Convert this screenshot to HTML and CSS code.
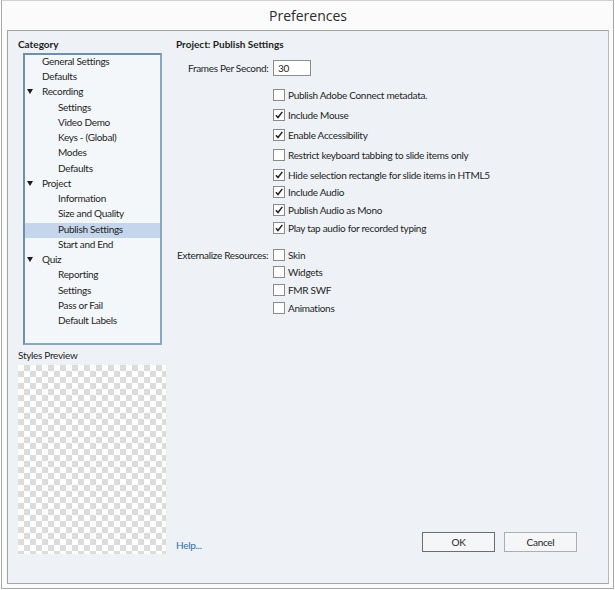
FILE: index.html
```html
<!DOCTYPE html>
<html>
<head>
<meta charset="utf-8">
<link rel="stylesheet" href="styles.css">
</head>
<body>
<div class="window">
  <div class="titlebar">Preferences</div>
  <div class="panel">
    <div class="left">
      <div class="heading">Category</div>
      <div class="tree">
        <div class="row l0">General Settings</div>
        <div class="row l0">Defaults</div>
        <div class="row l0"><span class="tri"></span>Recording</div>
        <div class="row l1">Settings</div>
        <div class="row l1">Video Demo</div>
        <div class="row l1">Keys - (Global)</div>
        <div class="row l1">Modes</div>
        <div class="row l1">Defaults</div>
        <div class="row l0"><span class="tri"></span>Project</div>
        <div class="row l1">Information</div>
        <div class="row l1">Size and Quality</div>
        <div class="row l1 sel">Publish Settings</div>
        <div class="row l1">Start and End</div>
        <div class="row l0"><span class="tri"></span>Quiz</div>
        <div class="row l1">Reporting</div>
        <div class="row l1">Settings</div>
        <div class="row l1">Pass or Fail</div>
        <div class="row l1">Default Labels</div>
      </div>
      <div class="preview-label">Styles Preview</div>
      <div class="checker"></div>
    </div>
    <div class="right">
      <div class="heading">Project: Publish Settings</div>
      <div class="fps">
        <span class="fps-label">Frames Per Second:</span>
        <span class="input">30</span>
      </div>
      <div class="opts">
        <div class="opt s20 first"><span class="cb"></span>Publish Adobe Connect metadata.</div>
        <div class="opt s20"><span class="cb on"><svg viewBox="0 0 12 12"><path d="M2.3 6.2 L4.8 9 L10 2.2" /></svg></span>Include Mouse</div>
        <div class="opt s20"><span class="cb on"><svg viewBox="0 0 12 12"><path d="M2.3 6.2 L4.8 9 L10 2.2" /></svg></span>Enable Accessibility</div>
        <div class="opt s20"><span class="cb"></span>Restrict keyboard tabbing to slide items only</div>
        <div class="opt s20"><span class="cb on"><svg viewBox="0 0 12 12"><path d="M2.3 6.2 L4.8 9 L10 2.2" /></svg></span>Hide selection rectangle for slide items in HTML5</div>
        <div class="opt s17"><span class="cb on"><svg viewBox="0 0 12 12"><path d="M2.3 6.2 L4.8 9 L10 2.2" /></svg></span>Include Audio</div>
        <div class="opt s18"><span class="cb on"><svg viewBox="0 0 12 12"><path d="M2.3 6.2 L4.8 9 L10 2.2" /></svg></span>Publish Audio as Mono</div>
        <div class="opt s18"><span class="cb on"><svg viewBox="0 0 12 12"><path d="M2.3 6.2 L4.8 9 L10 2.2" /></svg></span>Play tap audio for recorded typing</div>
      </div>
      <div class="ext">
        <div class="ext-label">Externalize Resources:</div>
        <div class="ext-list">
          <div class="opt first"><span class="cb"></span>Skin</div>
          <div class="opt s17"><span class="cb"></span>Widgets</div>
          <div class="opt s18"><span class="cb"></span>FMR SWF</div>
          <div class="opt s18"><span class="cb"></span>Animations</div>
        </div>
      </div>
      <div class="footer">
        <span class="help">Help...</span>
        <span class="btn ok">OK</span>
        <span class="btn">Cancel</span>
      </div>
    </div>
  </div>
</div>
</body>
</html>
```
FILE: styles.css
```css
html, body {
  margin: 0;
  padding: 0;
  background: #ffffff;
}
body {
  font-family: "Lato", "Open Sans", sans-serif;
  font-size: 10px;
  letter-spacing: -0.3px;
  color: #1e1e1e;
}
.window {
  box-sizing: border-box;
  border: 1px solid #a8a8a8;
  border-top-color: #d0d0d0;
  margin-left: 1px;
  width: 613px;
  height: 589px;
  background: #fbfbfb;
  display: flex;
  flex-direction: column;
  padding: 0 4px 4px 5px;
}
.titlebar {
  height: 29px;
  line-height: 30px;
  text-align: center;
  font-size: 14px;
  letter-spacing: 0;
  color: #2b2b2b;
  font-family: "Open Sans", sans-serif;
}
.panel {
  flex: 1;
  border: 1px solid #a3a3a3;
  border-right-color: #b8b8b8;
  background: #eef2f6;
  display: flex;
  padding: 6px 0 0 10px;
}
.left {
  width: 148px;
  display: flex;
  flex-direction: column;
}
.heading {
  font-weight: bold;
  letter-spacing: 0;
  height: 15px;
  line-height: 15px;
  white-space: nowrap;
}
.tree {
  margin: 1px 4px 0 5px;
  height: 288px;
  border: 2px solid #7896b0;
  border-color: #6f90ab #88a6bd #88a6bd #6f90ab;
  background: #f4f7fa;
}
.row {
  height: 15.24px;
  line-height: 12px;
  white-space: nowrap;
  position: relative;
}
.row.l0 { padding-left: 17px; }
.row.l1 { padding-left: 33px; }
.row.sel { background: #c4d5ec; }
.tri {
  position: absolute;
  left: 2px;
  top: 4px;
  width: 0;
  height: 0;
  border-left: 3px solid transparent;
  border-right: 3px solid transparent;
  border-top: 5px solid #1a1a1a;
}
.preview-label {
  margin-top: 4px;
  height: 13px;
  line-height: 13px;
}
.checker {
  margin-top: 3px;
  width: 148px;
  height: 189px;
  background-color: #ffffff;
  background-image:
    linear-gradient(45deg, #dcdcdc 25%, transparent 25%, transparent 75%, #dcdcdc 75%),
    linear-gradient(45deg, #dcdcdc 25%, transparent 25%, transparent 75%, #dcdcdc 75%);
  background-size: 12px 12px;
  background-position: 0 0, 6px 6px;
}
.right {
  flex: 1;
  margin-left: 10px;
  display: flex;
  flex-direction: column;
  padding-bottom: 31px;
}
.fps {
  display: flex;
  align-items: center;
  margin-top: 8px;
  padding-left: 12px;
}
.fps-label {
  width: 85px;
  flex: none;
  white-space: nowrap;
}
.input {
  box-sizing: border-box;
  width: 38px;
  height: 16px;
  line-height: 14px;
  border: 1px solid #8c8c8c;
  background: #fff;
  padding-left: 4px;
}
.opts {
  margin-top: 11px;
  padding-left: 97px;
}
.opt {
  display: flex;
  align-items: center;
  height: 16px;
  white-space: nowrap;
}
.opt.s20 { margin-top: 4px; }
.opt.s17 { margin-top: 1px; }
.opt.s18 { margin-top: 2px; }
.opt.first { margin-top: 0; }
.cb {
  box-sizing: border-box;
  width: 12px;
  height: 12px;
  border: 1px solid #8a8a8a;
  background: #fff;
  margin-right: 3px;
  flex: none;
  display: flex;
}
.cb svg {
  width: 10px;
  height: 10px;
  fill: none;
  stroke: #222;
  stroke-width: 1.8;
}
.ext {
  display: flex;
  margin-top: 11px;
}
.ext-label {
  width: 96px;
  flex: none;
  white-space: nowrap;
  height: 16px;
  line-height: 16px;
  padding-left: 1px;
}
.footer {
  margin-top: auto;
  display: flex;
  align-items: center;
}
.help {
  color: #2f6ea8;
  flex: 1;
  padding-top: 6px;
}
.btn {
  box-sizing: border-box;
  width: 73px;
  height: 20px;
  line-height: 18px;
  text-align: center;
  border: 1px solid #adadad;
  background: #f5f6f7;
  margin-right: 31px;
}
.btn.ok {
  border-color: #6e6e6e;
  margin-right: 9px;
}
```
